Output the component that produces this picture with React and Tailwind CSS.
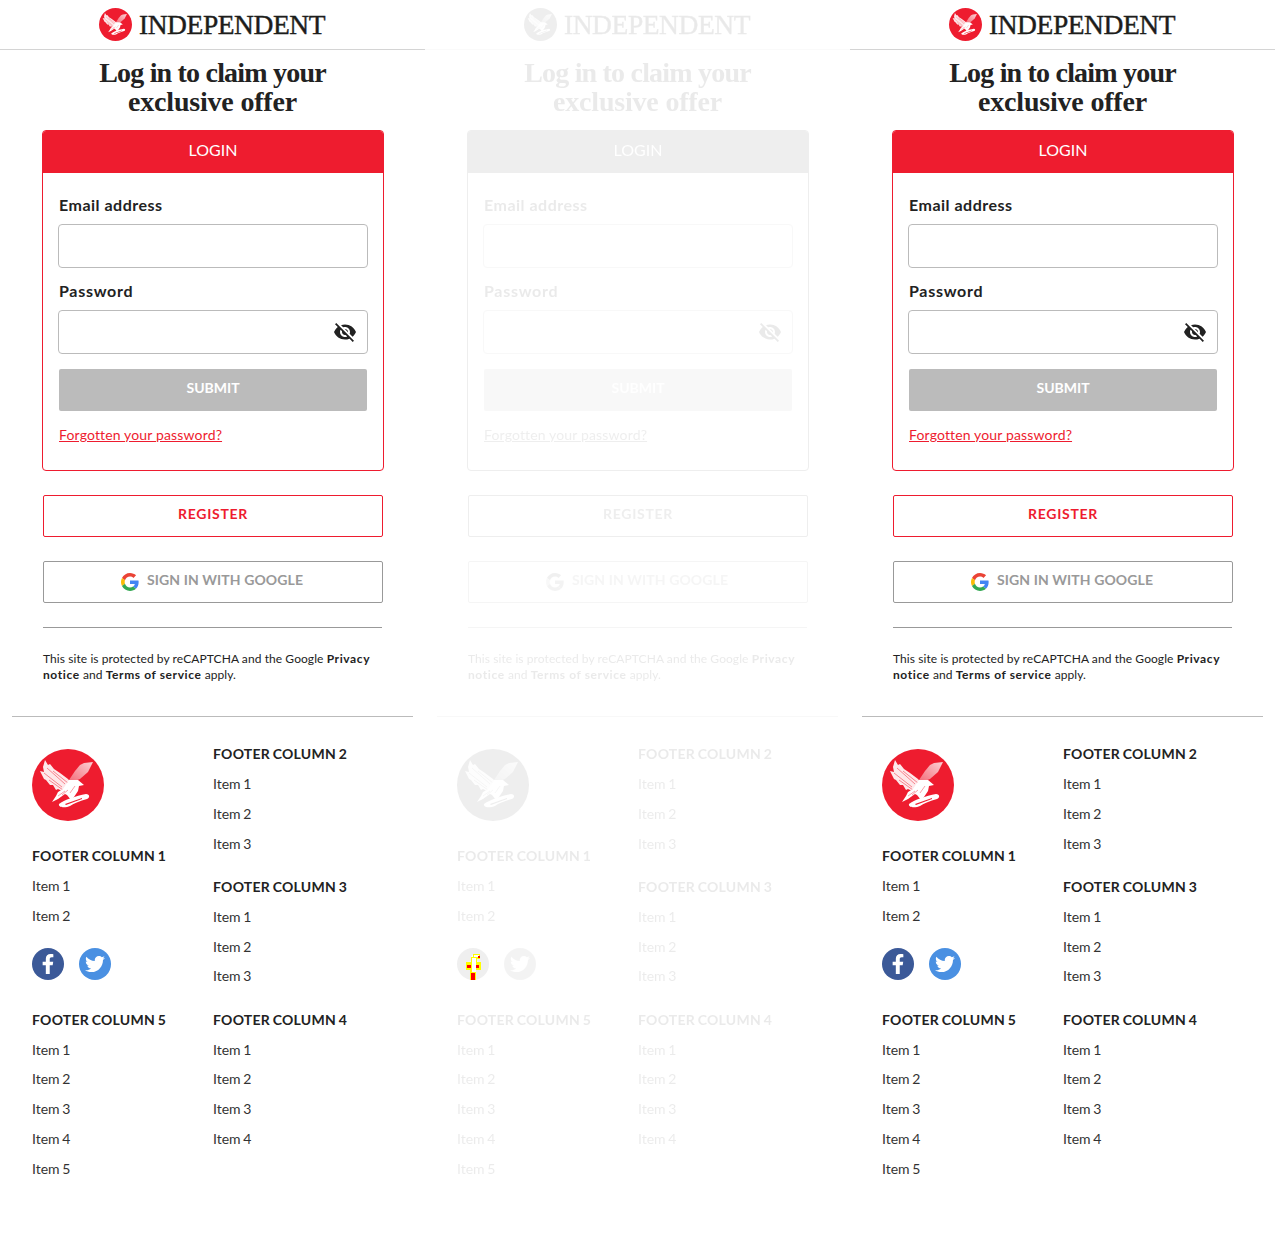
import { MdVisibilityOff } from 'react-icons/md'
import { FaFacebookF, FaTwitter } from 'react-icons/fa'

const sans = "font-['Lato',sans-serif]"

function Eagle() {
  return (
    <svg viewBox="0 0 72 72" className="w-full h-full">
      <defs>
        <linearGradient id="wingFade" x1="1" y1="0" x2="0" y2="1">
          <stop offset="0" stopColor="#fff" stopOpacity="0.8" />
          <stop offset="1" stopColor="#fff" stopOpacity="0.35" />
        </linearGradient>
      </defs>
      <circle cx="36" cy="36" r="36" fill="#ee1c2f" />
      {/* left wing */}
      <path fill="#fff" fillOpacity="0.9" d="M13 11 L16 16 L18 15 L22 20 L28 24 L36 30 L41 36 L35 44 L30 42 L26 40 L24 41 L21 36 L18 36 L14 31 L12 30 L8 22 L12 23 L11 18 Z" />
      <path fill="none" stroke="#ee1c2f" strokeWidth="0.7" strokeOpacity="0.7" d="M15 19 L33 35 M12 24 L30 38 M17 31 L31 41 M21 22 L36 34" />
      {/* right wing */}
      <path fill="url(#wingFade)" d="M61 13 L52 14 L48 16 L43 22 L37 31 L40 33 L48 30 L56 23 Z" />
      {/* body and tail */}
      <path fill="#fff" d="M37 31 L46 31 L52 36 L47 37 L46 42 L42 48 L39 51 L35 46 L33 45 L26 50 L20 53 L24 47 L26 43 L31 40 Z" />
      <path fill="none" stroke="#ee1c2f" strokeWidth="0.6" strokeOpacity="0.7" d="M26 47 L33 42 M30 46 L36 41 M38 44 L43 37" />
      {/* branch */}
      <path fill="#fff" d="M27 55 C32 51 44 47 54 45 C58 45 58 49 55 50 C48 52 42 54 38 57 C34 59 26 59 27 55Z" />
      <path fill="#ee1c2f" d="M33 55 L50 49 L50 50 L34 56Z" />
    </svg>
  )
}

function GoogleIcon() {
  return (
    <svg viewBox="0 0 48 48" className="w-[18px] h-[18px]">
      <path fill="#EA4335" d="M24 9.5c3.500 0 6.700 1.200 9.200 3.600l6.900-6.900C35.900 2.400 30.500 0 24 0 14.600 0 6.500 5.400 2.600 13.200l8 6.200C12.500 13.600 17.800 9.500 24 9.500z" />
      <path fill="#4285F4" d="M47 24.500c0-1.600-.1-3.100-.4-4.500H24v9h12.900c-.6 3-2.200 5.500-4.800 7.200l7.700 6C44.300 38 47 31.800 47 24.500z" />
      <path fill="#FBBC05" d="M10.600 28.600c-.5-1.400-.8-3-.8-4.600s.3-3.200.8-4.600l-8-6.200C.9 16.500 0 20.100 0 24s.9 7.500 2.600 10.800l8-6.200z" />
      <path fill="#34A853" d="M24 48c6.500 0 11.900-2.100 15.800-5.800l-7.700-6c-2.200 1.400-4.900 2.300-8.100 2.300-6.200 0-11.500-4.100-13.400-9.900l-8 6.200C6.500 42.600 14.600 48 24 48z" />
    </svg>
  )
}

function FooterColumn({ title, items }) {
  return (
    <div className="flex flex-col">
      <h3 className="h-[30px] text-[14px] leading-[20px] font-bold tracking-[0.25px] [word-spacing:-1px] text-[#222]">{title}</h3>
      {items.map((item) => (
        <a key={item} className="h-[29.75px] text-[14px] leading-[20px] [word-spacing:-1px] text-[#333]">{item}</a>
      ))}
    </div>
  )
}

function Panel() {
  return (
    <div className={`w-[425px] shrink-0 bg-white ${sans}`}>
      <header className="h-[50px] pr-px border-b border-[#d4d4d4] flex items-center justify-center gap-[7px]">
        <div className="w-[33px] h-[33px]"><Eagle /></div>
        <span className="font-['Liberation_Serif',serif] text-[27.5px] leading-none text-[#1d1d1b] tracking-[-0.45px] [-webkit-text-stroke:0.4px_#1d1d1b]">INDEPENDENT</span>
      </header>

      <h1 className="pt-[8px] flex flex-col text-center font-['Liberation_Serif',serif] font-bold text-[28px] leading-[29px] text-[#222]">
        <span className="tracking-[-0.8px]">Log in to claim your</span>
        <span className="tracking-[-0.2px]">exclusive offer</span>
      </h1>

      <section className="ml-[42px] mr-[41px] mt-[14px] h-[341px] border border-[#ee1c2f] rounded-[4px] overflow-hidden">
        <div className="h-[43px] -mt-px -mx-px bg-[#ee1c2f] flex items-center justify-center text-white text-[16px] pb-[3px]">LOGIN</div>
        <div className="px-[15px] pt-[21px]">
          <label className="block text-[16px] leading-[22px] font-bold tracking-[0.5px] text-[#222] pl-px">Email address</label>
          <div className="mt-[8px] h-[44px] border border-[#bbb] rounded-[4px]" />
          <label className="block mt-[12px] text-[16px] leading-[22px] font-bold tracking-[0.7px] text-[#222] pl-px">Password</label>
          <div className="mt-[8px] h-[44px] border border-[#bbb] rounded-[4px] flex items-center justify-end pr-[10px]">
            <MdVisibilityOff size={24} className="text-[#222]" />
          </div>
          <button className="mt-[15px] ml-px w-[308px] h-[42px] bg-[#bbb] rounded-[2px] text-white text-[14px] font-bold flex items-center justify-center pb-[5px]">SUBMIT</button>
          <a className="block mt-[14px] pl-px text-[14px] leading-[20px] tracking-[0.15px] text-[#ee1c2f] underline">Forgotten your password?</a>
        </div>
      </section>

      <button className="block mx-[43px] mt-[24px] w-[340px] h-[42px] border border-[#ee1c2f] rounded-[2px] text-[#ee1c2f] text-[14px] font-bold tracking-[0.7px] pb-[5px]">REGISTER</button>
      <button className="mx-[43px] mt-[24px] w-[340px] h-[42px] border border-[#999] rounded-[2px] text-[#999] text-[14px] font-bold tracking-[0.1px] flex items-center justify-center gap-[8px] pr-[2px]">
        <GoogleIcon />
        <span className="pb-[5px]">SIGN IN WITH GOOGLE</span>
      </button>

      <div className="mx-[43px] mt-[24px] border-t border-[#999]" />
      <p className="mx-[43px] mt-[23px] text-[12px] leading-[16px] tracking-[0.08px] text-[#222]">
        This site is protected by reCAPTCHA and the Google <b className="tracking-[0.6px]">Privacy notice</b> and <b className="tracking-[0.6px]">Terms of service</b> apply.
      </p>

      <div className="mx-[12px] mt-[33px] border-t border-[#bbb]" />

      <footer className="flex pl-[32px] pt-[27px]">
        <div className="w-[181px] flex flex-col">
          <div className="w-[72px] h-[72px] mt-[5px]"><Eagle /></div>
          <div className="mt-[25px]">
            <FooterColumn title="FOOTER COLUMN 1" items={['Item 1', 'Item 2']} />
          </div>
          <div className="flex gap-[15px] mt-[12px]">
            <span className="w-[32px] h-[32px] rounded-full bg-[#3b5998] flex items-center justify-center text-white"><FaFacebookF size={20} /></span>
            <span className="w-[32px] h-[32px] rounded-full bg-[#4a90e2] flex items-center justify-center text-white"><FaTwitter size={20} /></span>
          </div>
          <div className="mt-[30px]">
            <FooterColumn title="FOOTER COLUMN 5" items={['Item 1', 'Item 2', 'Item 3', 'Item 4', 'Item 5']} />
          </div>
        </div>
        <div className="flex flex-col gap-[13.5px]">
          <FooterColumn title="FOOTER COLUMN 2" items={['Item 1', 'Item 2', 'Item 3']} />
          <FooterColumn title="FOOTER COLUMN 3" items={['Item 1', 'Item 2', 'Item 3']} />
          <FooterColumn title="FOOTER COLUMN 4" items={['Item 1', 'Item 2', 'Item 3', 'Item 4']} />
        </div>
      </footer>
    </div>
  )
}

export default function App() {
  return (
    <div className="flex w-[1275px] h-[1238px] overflow-hidden bg-white">
      <Panel />
      <div className="relative w-[425px] shrink-0">
        <div className="grayscale opacity-[0.09]">
          <Panel />
        </div>
        {/* stray marker on the faded facebook icon */}
        <svg width="20" height="32" viewBox="0 0 20 32" shapeRendering="crispEdges" className="absolute left-[38px] top-[950px]">
          <path fill="#ff0" d="M10 4h7v5h-7zM8 7h6v6H8zM3 12h15v8H3zM7 20h6v10H7z" />
          <path fill="#fff" d="M11 5h5v2h-5zM9 8h4v14H9z" />
          <path fill="#f00" d="M15 6h2v2h-2zM4 15h4v3H4zM13 15h3v3h-3zM8 23h4v7H8z" />
        </svg>
      </div>
      <Panel />
    </div>
  )
}
